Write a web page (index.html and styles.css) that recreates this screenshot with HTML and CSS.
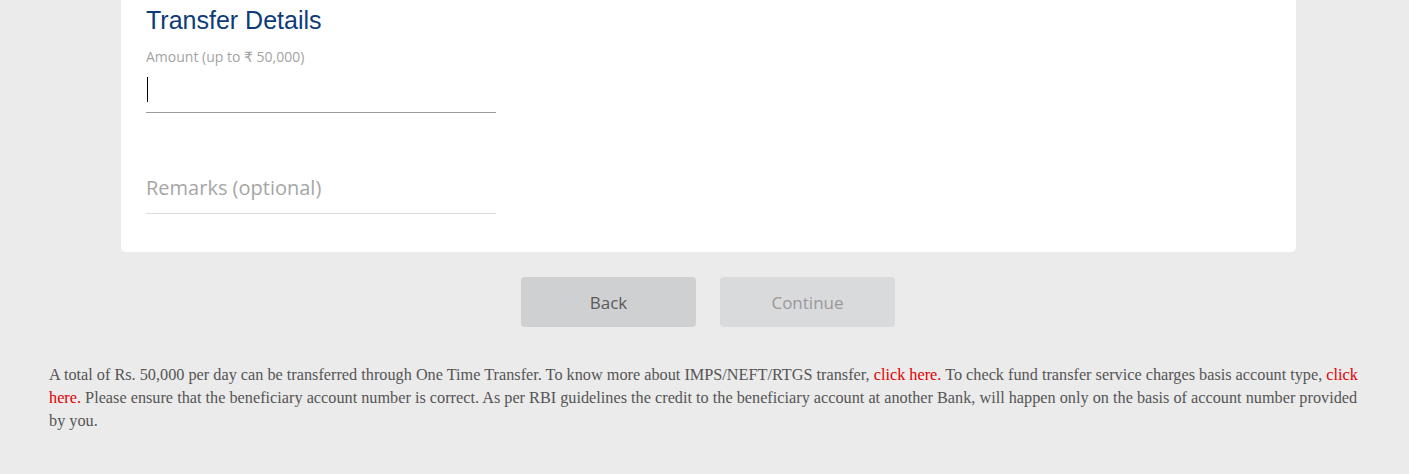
FILE: index.html
```html
<!DOCTYPE html>
<html>
<head>
<meta charset="utf-8">
<link rel="stylesheet" href="styles.css">
</head>
<body>
<div class="page">
  <div class="card">
    <h2 class="title">Transfer Details</h2>
    <div class="field">
      <div class="label-small">Amount (up to ₹ 50,000)</div>
      <div class="input active"><span class="caret"></span></div>
    </div>
    <div class="field remarks">
      <div class="input light"><span class="placeholder">Remarks (optional)</span></div>
    </div>
  </div>
  <div class="actions">
    <button class="btn back">Back</button>
    <button class="btn cont">Continue</button>
  </div>
</div>
<p class="note">A total of Rs. 50,000 per day can be transferred through One Time Transfer. To know more about IMPS/NEFT/RTGS transfer, <a href="#">click here.</a> To check fund transfer service charges basis account type, <a href="#">click here.</a> Please ensure that the beneficiary account number is correct. As per RBI guidelines the credit to the beneficiary account at another Bank, will happen only on the basis of account number provided by you.</p>
</body>
</html>
```

FILE: styles.css
```css
html, body {
  margin: 0;
  padding: 0;
  background: #ebebeb;
}
.page {
  margin-left: 121px;
  width: 1175px;
}
.card {
  background: #fff;
  border-radius: 0 0 5px 5px;
  padding: 5px 25px 38px 25px;
}
.title {
  margin: 0;
  font-family: "Liberation Sans", Arial, sans-serif;
  font-weight: normal;
  font-size: 25px;
  line-height: 30px;
  color: #0d3c78;
}
.label-small {
  margin-top: 12px;
  font-family: "Open Sans", "DejaVu Sans", sans-serif;
  font-size: 14px;
  line-height: 19px;
  color: #a3a3a3;
}
.input {
  width: 350px;
  border-bottom: 1px solid #9b9b9b;
  height: 40px;
  display: flex;
  align-items: center;
}
.input.active {
  margin-top: 5px;
  height: 41px;
}
.input.light {
  border-bottom-color: #dcdcdc;
}
.caret {
  display: block;
  width: 1px;
  height: 25px;
  background: #000;
  margin-left: 1px;
  margin-bottom: 4px;
}
.remarks {
  margin-top: 59px;
}
.remarks .input {
  height: 41px;
  align-items: flex-start;
}
.placeholder {
  font-family: "Open Sans", sans-serif;
  font-size: 20px;
  line-height: 28px;
  color: #a6a6a6;
  padding-top: 2px;
}
.actions {
  display: flex;
  justify-content: center;
  gap: 24px;
  margin-top: 25px;
  padding-right: 1px;
}
.btn {
  width: 175px;
  height: 50px;
  border: 0;
  border-radius: 4px;
  font-family: "Open Sans", sans-serif;
  font-size: 17px;
}
.back {
  background: #cfd0d2;
  color: #5a5a5a;
}
.cont {
  background: #d9dadc;
  color: #999;
}
.note {
  margin: 37px 0 0 0;
  padding: 0 42px 0 49px;
  font-family: "Liberation Serif", "Times New Roman", serif;
  font-size: 16.25px;
  line-height: 23px;
  color: #555;
}
.note a {
  color: #e00000;
  text-decoration: none;
}
```
